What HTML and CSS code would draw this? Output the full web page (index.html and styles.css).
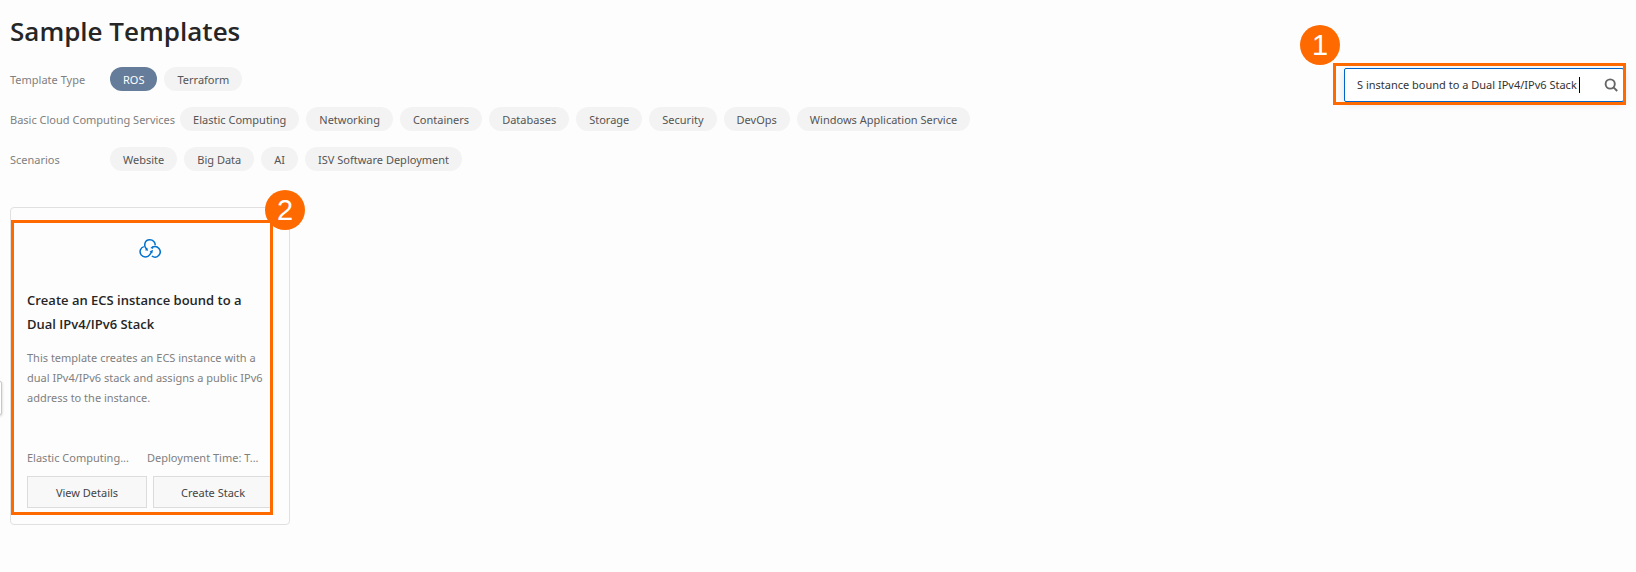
FILE: index.html
```html
<!DOCTYPE html>
<html lang="en">
<head>
    <meta charset="UTF-8">
    <meta name="viewport" content="width=device-width, initial-scale=1.0">
    <title>Sample Templates</title>
    <link rel="stylesheet" href="styles.css">
</head>
<body>
    <button type="button" class="side-toggle" aria-label="Expand menu"></button>

    <h1>Sample Templates</h1>

    <div class="toolbar">
        <div class="filters">
            <div class="filter-row">
                <span class="filter-label">Template Type</span>
                <div class="tags">
                    <button type="button" class="tag active">ROS</button>
                    <button type="button" class="tag">Terraform</button>
                </div>
            </div>
            <div class="filter-row">
                <span class="filter-label">Basic Cloud Computing Services</span>
                <div class="tags">
                    <button type="button" class="tag">Elastic Computing</button>
                    <button type="button" class="tag">Networking</button>
                    <button type="button" class="tag">Containers</button>
                    <button type="button" class="tag">Databases</button>
                    <button type="button" class="tag">Storage</button>
                    <button type="button" class="tag">Security</button>
                    <button type="button" class="tag">DevOps</button>
                    <button type="button" class="tag">Windows Application Service</button>
                </div>
            </div>
            <div class="filter-row">
                <span class="filter-label">Scenarios</span>
                <div class="tags">
                    <button type="button" class="tag">Website</button>
                    <button type="button" class="tag">Big Data</button>
                    <button type="button" class="tag">AI</button>
                    <button type="button" class="tag">ISV Software Deployment</button>
                </div>
            </div>
        </div>

        <form class="search">
            <input type="text" class="search-input" aria-label="Search templates" value="S instance bound to a Dual IPv4/IPv6 Stack">
            <span class="caret"></span>
            <button type="button" class="search-btn" aria-label="Search">
                <svg width="14" height="14" viewBox="0 0 14 14" fill="none" stroke="#666" stroke-width="1.9">
                    <circle cx="6.2" cy="6" r="4.6"/>
                    <path d="M9.5 9.3L13.2 13"/>
                </svg>
            </button>
            <span class="highlight search-highlight"></span>
            <span class="step search-step">1</span>
        </form>
    </div>

    <div class="card">
        <svg class="card-icon" width="24" height="24" viewBox="0 0 24 24" fill="none" stroke="#0070cc" stroke-width="1.5">
            <path d="M9 12.2C5.3 9.6 6.2 2.8 11.8 2.8C15.2 2.8 17.4 5.4 17.2 8.2"/>
            <path d="M5.8 9.6A5.3 5.3 0 1 0 11.8 17.6L13.6 14.8"/>
            <path d="M14.2 10.4A5.2 5.2 0 1 1 13.8 19"/>
            <path d="M15 12.8L14.3 16.2 11.6 14.4Z" fill="#0070cc" stroke="none"/>
            <path d="M10.2 13.8L7 13.2 9 10.6Z" fill="#0070cc" stroke="none"/>
            <path d="M12.4 11L14.6 9 15.2 12Z" fill="#0070cc" stroke="none"/>
        </svg>
        <h2>Create an ECS instance bound to a Dual IPv4/IPv6 Stack</h2>
        <p>This template creates an ECS instance with a dual IPv4/IPv6 stack and assigns a public IPv6 address to the instance.</p>
        <div class="card-meta">
            <span>Elastic Computing...</span>
            <span>Deployment Time: T...</span>
        </div>
        <div class="card-actions">
            <button type="button" class="btn">View Details</button>
            <button type="button" class="btn">Create Stack</button>
        </div>
        <span class="highlight card-highlight"></span>
        <span class="step card-step">2</span>
    </div>
</body>
</html>
```

FILE: styles.css
```css
* {
    box-sizing: border-box;
}

body {
    margin: 0;
    padding: 11px 12px 0 10px;
    background-color: #fdfdfd;
    color: #333;
    font-family: "Segoe UI", "Noto Sans", sans-serif;
    font-size: 11px;
    line-height: 20px;
}

button,
input {
    font: inherit;
    margin: 0;
}

button {
    cursor: pointer;
}

h1 {
    margin: 0 0 16px;
    font-family: "Segoe UI", "Open Sans", sans-serif;
    font-size: 26px;
    font-weight: 600;
    line-height: 40px;
    color: #262626;
}

.toolbar {
    display: flex;
    justify-content: space-between;
    align-items: flex-start;
}

.filters {
    display: flex;
    flex-direction: column;
    gap: 16px;
}

.filter-row {
    display: flex;
    align-items: center;
}

.filter-label {
    min-width: 100px;
    padding: 1px 5px 0 0;
    color: #808080;
    white-space: nowrap;
}

.tags {
    display: flex;
    gap: 7px;
}

.tag {
    height: 24px;
    padding: 1px 13px 0;
    border: none;
    border-radius: 12px;
    background-color: #f3f3f3;
    color: #555;
    white-space: nowrap;
}

.tag.active {
    background-color: #657c9a;
    color: #fff;
}

.search {
    position: relative;
    display: flex;
    align-items: center;
    width: 280px;
    height: 34px;
    margin-top: 1px;
    padding: 0 5px 0 12px;
    border: 1px solid #0064c8;
    border-radius: 2px;
    box-shadow: 0 2px 8px rgba(0, 0, 0, 0.12);
    background-color: #fff;
}

.search-input {
    flex: 1;
    min-width: 0;
    padding: 0;
    border: none;
    outline: none;
    background: none;
    color: #333;
}

.caret {
    position: absolute;
    left: 234px;
    width: 1px;
    height: 16px;
    background-color: #000;
}

.search-btn {
    display: flex;
    padding: 0;
    border: none;
    background: none;
}

.highlight {
    position: absolute;
    border: 3px solid #ff6a00;
    pointer-events: none;
}

.search-highlight {
    inset: -6px -3px -4px -12px;
}

.step {
    position: absolute;
    width: 40px;
    height: 40px;
    border-radius: 50%;
    background-color: #ff6a00;
    color: #fff;
    font-family: "Liberation Sans", Arial, sans-serif;
    font-size: 29px;
    line-height: 40px;
    text-align: center;
}

.search-step {
    top: -44px;
    left: -45px;
}

.card {
    position: relative;
    width: 280px;
    margin-top: 36px;
    padding: 29px 16px 16px;
    border: 1px solid #e0e0e0;
    border-radius: 4px;
}

.card-icon {
    display: block;
    margin: 0 auto;
}

.card h2 {
    margin: 27px 0 12px;
    font-family: "Segoe UI", "Open Sans", sans-serif;
    font-size: 13px;
    font-weight: 600;
    line-height: 24px;
    color: #262626;
}

.card p {
    height: 80px;
    margin: 0;
    color: #808080;
}

.card-meta {
    display: grid;
    grid-template-columns: 120px 1fr;
    margin: 20px 0 8px;
    color: #808080;
    white-space: nowrap;
}

.card-actions {
    display: flex;
    gap: 6px;
}

.btn {
    flex: 1;
    height: 32px;
    padding: 1px 0 0;
    border: 1px solid #dcdcdc;
    background-color: #f8f8f8;
    color: #444;
}

.card-highlight {
    inset: 12px 16px 9px 0;
}

.card-step {
    top: -18px;
    left: 254px;
}

.side-toggle {
    position: absolute;
    top: 381px;
    left: -14px;
    width: 16px;
    height: 34px;
    padding: 0;
    border: 1px solid #c8c8c8;
    border-radius: 2px;
    background-color: #fff;
    box-shadow: 0 1px 3px rgba(0, 0, 0, 0.2);
}
```
